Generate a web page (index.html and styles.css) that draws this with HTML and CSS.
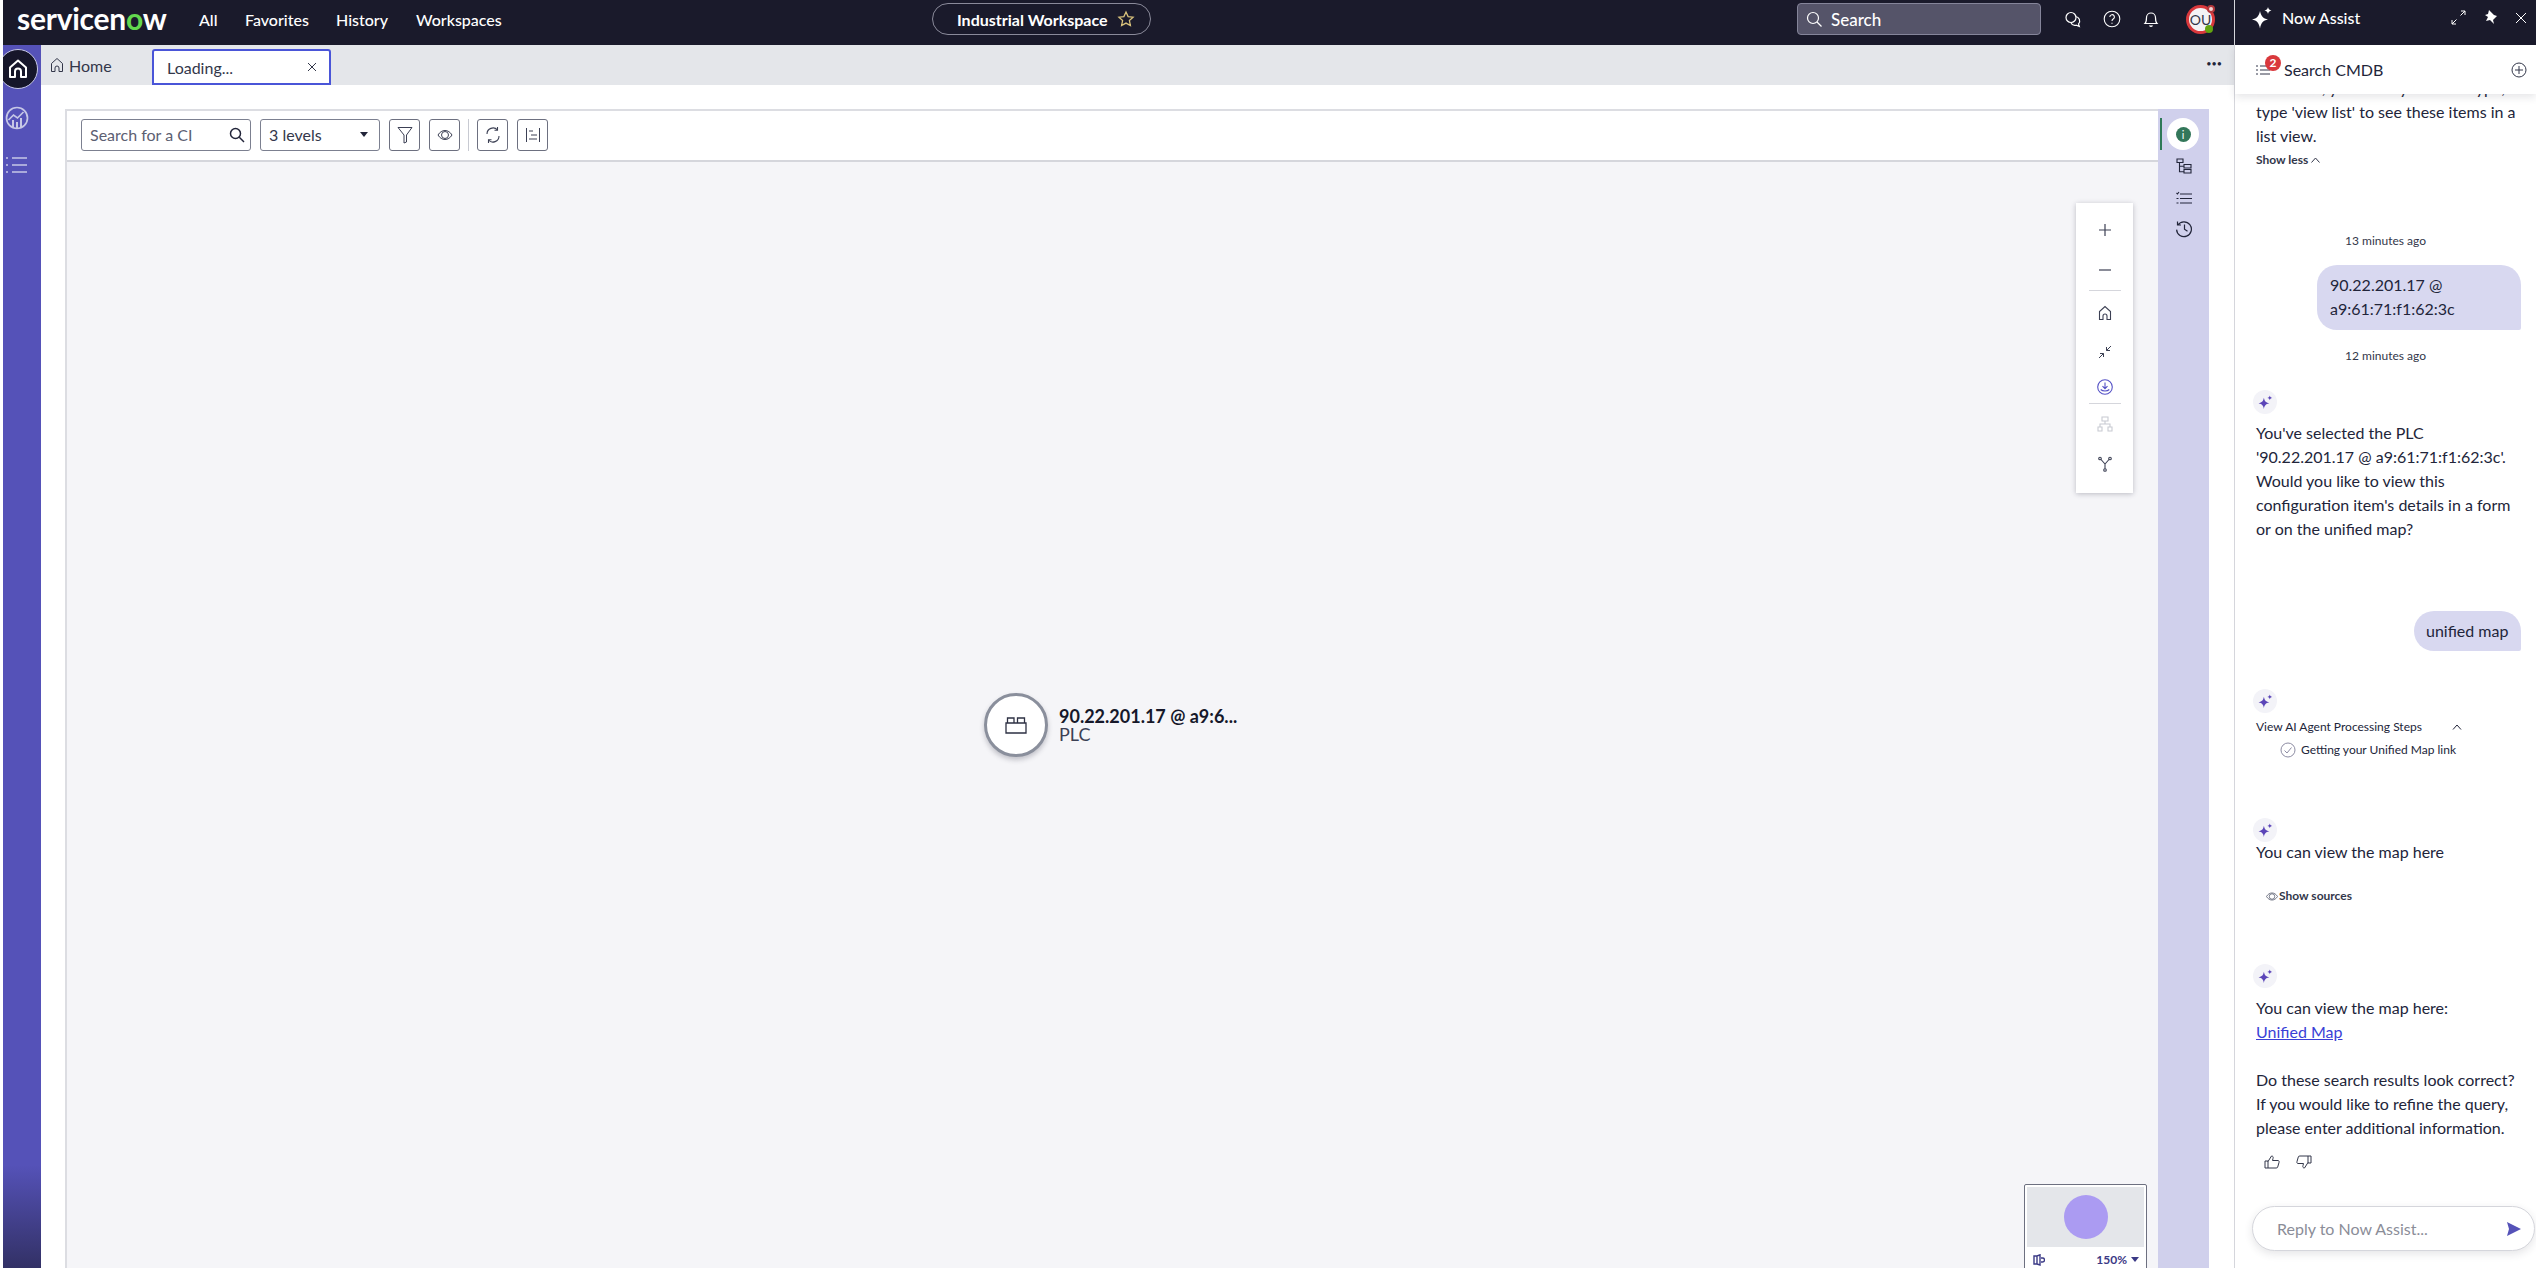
FILE: index.html
```html
<!DOCTYPE html>
<html lang="en">
  <head>
    <meta charset="UTF-8" />
    <title>Unified Map</title>
    <link rel="stylesheet" href="styles.css">
  </head>
  <body>
    <div class="app">
      <main class="main">
        <!-- Top navigation -->
        <header class="topbar">
          <div class="logo">servicen<span class="logo-o">o</span>w</div>
          <nav class="nav-links">
            <a class="nav-all">All</a>
            <a class="nav-fav">Favorites</a>
            <a class="nav-his">History</a>
            <a>Workspaces</a>
          </nav>
          <div class="workspace-pill">
            Industrial Workspace
            <svg width="18" height="18" viewBox="0 0 18 18"><path d="M9 2l2.100 4.600 5 .6-3.700 3.400 1 5L9 13.100 4.600 15.600l1-5L1.900 7.200l5-.6z" fill="none" stroke="#d9c27c" stroke-width="1.300"/></svg>
          </div>
          <div class="global-search">
            <svg width="18" height="18" viewBox="0 0 18 18" fill="none" stroke="#fff" stroke-width="1.200"><circle cx="8" cy="8" r="5.500"/><path d="M12 12l4.500 4.500"/></svg>
            <span>Search</span>
          </div>
          <div class="top-icons">
            <svg width="18" height="18" viewBox="0 0 18 18" fill="none" stroke="#fff" stroke-width="1.200"><circle cx="7" cy="7.500" r="5"/><path d="M11.500 6.500a4.500 4.500 0 0 1 3 7.500l.8 2.500-3-1.300a4.500 4.500 0 0 1-5.300-2.200"/></svg>
            <svg width="18" height="18" viewBox="0 0 18 18" fill="none" stroke="#fff" stroke-width="1.100"><circle cx="9" cy="9" r="7.800"/><path d="M6.800 7a2.300 2.300 0 1 1 3.400 2c-.8.500-1.200 1-1.200 2M9 12.700v1"/></svg>
            <svg width="18" height="18" viewBox="0 0 18 18" fill="none" stroke="#fff" stroke-width="1.200"><path d="M3 13.500c1.500-1.500 1.500-3 1.500-6a4.500 4.500 0 0 1 9 0c0 3 0 4.500 1.500 6zM7.500 15.500c.8.800 2.200.8 3 0"/></svg>
          </div>
          <div class="avatar">
            OU
            <span class="avatar-dot-top"></span>
            <span class="avatar-dot"></span>
          </div>
        </header>

        <div class="workspace">
          <!-- Left icon strip -->
          <aside class="sidebar">
            <div class="side-home">
              <svg width="24" height="24" viewBox="0 0 24 24" fill="none" stroke="#fff" stroke-width="2"><path d="M4 20V10.500L12 3.500l8 7V20h-5v-5.500a3 3 0 0 0-6 0V20z" stroke-linejoin="round"/></svg>
            </div>
            <svg class="side-chart" width="24" height="24" viewBox="0 0 24 24" fill="none" stroke="#c6c7e6" stroke-width="1.700"><circle cx="12" cy="12" r="10.500"/><path d="M3.500 14l5-5 4 3 6-6" /><path d="M8 21v-7M12 22v-6M16 21v-9" stroke-width="2"/></svg>
            <svg class="side-list" width="24" height="24" viewBox="0 0 24 24" fill="none" stroke="#c6c7e6" stroke-width="1.600"><path d="M1 5h2M7 5h15M1 12h2M7 12h15M1 19h2M7 19h15"/></svg>
          </aside>

          <div class="content-col">
            <div class="tabs">
              <div class="tab-home">
                <svg width="14" height="16" viewBox="0 0 14 16" fill="none" stroke="#33374a" stroke-width="1"><path d="M1.500 14.500V6.500L7 1.500l5.500 5v8H9V11a2 2 0 0 0-4 0v3.500z"/></svg>
                Home
              </div>
              <div class="tab-active">
                Loading...
                <svg width="10" height="10" viewBox="0 0 10 10" stroke="#33374a" stroke-width="1"><path d="M1 1l8 8M9 1l-8 8"/></svg>
              </div>
              <div class="tab-more">&bull;&bull;&bull;</div>
            </div>

            <div class="content">
              <div class="map-card">
                <div class="map-main">
                  <div class="map-toolbar">
                    <div class="ci-search">
                      <span>Search for a CI</span>
                      <svg width="16" height="16" viewBox="0 0 16 16" fill="none" stroke="#22253a" stroke-width="1.500"><circle cx="6.500" cy="6.500" r="5"/><path d="M10.300 10.300l4.700 4.700"/></svg>
                    </div>
                    <div class="level-select">
                      <span>3 levels</span>
                      <i class="caret"></i>
                    </div>
                    <button class="tool-btn">
                      <svg width="16" height="18" viewBox="0 0 16 18" fill="none" stroke="#3c4054"><path d="M1 1.500h14L9.500 9v7L7 17V9z"/></svg>
                    </button>
                    <button class="tool-btn">
                      <svg width="16" height="14" viewBox="0 0 16 14" fill="none" stroke="#3c4054"><path d="M1 7c3.500-6 10.500-6 14 0-3.500 6-10.500 6-14 0z"/><circle cx="8" cy="7" r="3.500"/></svg>
                    </button>
                    <span class="tool-divider"></span>
                    <button class="tool-btn">
                      <svg width="16" height="18" viewBox="0 0 16 18" fill="none" stroke="#3c4054" stroke-width="1.100"><path d="M2 8a6 6 0 0 1 10.500-4M14 10a6 6 0 0 1-10.500 4"/><path d="M12.500 1v3.200H9.500M3.500 17v-3.200h3"/></svg>
                    </button>
                    <button class="tool-btn">
                      <svg width="16" height="16" viewBox="0 0 16 16" fill="none" stroke="#3c4054"><path d="M1.500 1v14M14.500 1v14M4 4h4M6 8h6M4 12h8"/></svg>
                    </button>
                  </div>

                  <div class="map-canvas">
                    <div class="map-controls">
                      <button class="ctl"><svg width="16" height="16" viewBox="0 0 16 16" stroke="#3c4054" stroke-width="1.200"><path d="M8 2v12M2 8h12"/></svg></button>
                      <button class="ctl ctl-minus"><svg width="14" height="4" viewBox="0 0 14 4" stroke="#3c4054" stroke-width="1.200"><path d="M1 2h12"/></svg></button>
                      <hr class="ctl-sep">
                      <button class="ctl ctl-home"><svg width="14" height="16" viewBox="0 0 14 16" fill="none" stroke="#3c4054" stroke-width="1.100"><path d="M1.500 14.500V6.500L7 1.500l5.500 5v8H9V11a2 2 0 0 0-4 0v3.500z"/></svg></button>
                      <button class="ctl ctl-fit"><svg width="14" height="14" viewBox="0 0 14 14" fill="none" stroke="#3c4054" stroke-width="1"><path d="M1 13l4.500-4.500M2 8.500h3.500V12M13 1L8.500 5.500M12 5.500H8.500V2"/></svg></button>
                      <button class="ctl ctl-save"><svg width="16" height="16" viewBox="0 0 16 16" fill="none" stroke="#5552c6" stroke-width="1.100"><circle cx="8" cy="8" r="7.300"/><path d="M8 3.500v6M5.500 7.200L8 9.700l2.500-2.500M3.700 10.500c2 2 6.600 2 8.600 0" /></svg></button>
                      <hr class="ctl-sep ctl-sep-low">
                      <button class="ctl ctl-tree"><svg width="16" height="16" viewBox="0 0 16 16" fill="none" stroke="#c8cad2" stroke-width="1.100"><path d="M5 1h6v4H5zM1 11h4v4H1zM11 11h4v4h-4zM8 5v3M3 11V8h10v3"/></svg></button>
                      <button class="ctl ctl-fork"><svg width="14" height="16" viewBox="0 0 14 16" fill="none" stroke="#3c4054" stroke-width="1.100"><circle cx="2" cy="2.500" r="1.300"/><circle cx="12" cy="2.500" r="1.300"/><circle cx="7" cy="14" r="1.300"/><path d="M3 3.500L7 8l4-4.500M7 8v4.700"/></svg></button>
                    </div>

                    <div class="ci-node">
                      <div class="ci-circle">
                        <svg width="22" height="18" viewBox="0 0 22 18" fill="none" stroke="#2d3043" stroke-width="1.300"><path d="M1 7h20v10H1zM2.500 7V2h6.500v5M12.500 7V2H19.500v5"/></svg>
                      </div>
                      <div class="ci-label">
                        <div class="ci-name">90.22.201.17 @ a9:6...</div>
                        <div class="ci-type">PLC</div>
                      </div>
                    </div>

                    <div class="minimap">
                      <div class="minimap-view"><span class="minimap-dot"></span></div>
                      <div class="minimap-foot">
                        <svg width="12" height="12" viewBox="0 0 12 12" fill="none" stroke="#3b3a86" stroke-width="1.400"><path d="M1 2h3l3-1.200V11L4 10H1zM4 2v8M8 4h1.500a2 2 0 0 1 0 4H8"/></svg>
                        <span>150%</span><i class="caret caret-blue"></i>
                      </div>
                    </div>
                  </div>
                </div>

                <!-- Contextual side rail -->
                <div class="rail">
                  <div class="rail-info"><span class="info-dot">i</span></div>
                  <svg class="rail-tree" width="16" height="16" viewBox="0 0 16 16" fill="none" stroke="#22253a" stroke-width="1.100"><path d="M1 1h6v3.500H1zM8 6.500h7V10H8zM8 11.500h7V15H8zM3.500 4.500v9.300H8M3.500 8.300H8"/></svg>
                  <svg class="rail-steps" width="16" height="14" viewBox="0 0 16 14" fill="none" stroke="#22253a" stroke-width="1.100"><path d="M4 3h12M4 7.500h12M4 12h12M.5 7.500h2M.5 12h2M.5 2l1 1 1.500-2"/></svg>
                  <svg class="rail-history" width="18" height="18" viewBox="0 0 18 18" fill="none" stroke="#22253a" stroke-width="1.200"><path d="M2.900 5A7.400 7.400 0 1 1 1.600 9.600M2.500 1.500V5H6M9.500 4.500v4.800l3 2"/></svg>
                </div>
              </div>
            </div>
          </div>
        </div>
      </main>

      <!-- Now Assist panel -->
      <aside class="assist">
        <div class="assist-bar">
          <svg width="22" height="24" viewBox="0 0 22 24" fill="#fff"><path d="M9 5c1 5 3 7.500 8 8.500-5 1-7 3.500-8 9-1-5.500-3-8-8-9 5-1 7-3.500 8-8.500zM17 1c.4 2 1.200 3 3.500 3.500-2.300.5-3.100 1.500-3.500 3.500-.4-2-1.200-3-3.500-3.500 2.300-.5 3.100-1.500 3.500-3.500z"/></svg>
          <span class="assist-title">Now Assist</span>
          <svg class="bar-expand" width="15" height="15" viewBox="0 0 15 15" fill="none" stroke="#fff"><path d="M1 14l4.500-4.500M1 10v4h4M14 1L9.500 5.500M10 1h4v4"/></svg>
          <svg class="bar-pin" width="14" height="16" viewBox="0 0 14 16" fill="#fff"><path d="M5 0l5 5 3 1-4 4 1 4-4-4-4 1 2-4-3-2 3-1z"/></svg>
          <svg class="bar-close" width="12" height="12" viewBox="0 0 12 12" stroke="#fff"><path d="M1 1l10 10M11 1L1 11"/></svg>
        </div>

        <div class="assist-sub">
          <svg class="sub-list" width="14" height="14" viewBox="0 0 14 14" stroke="#33374a"><path d="M0 3h2M4 3h10M0 7h2M4 7h10M0 11h2M4 11h10"/></svg>
          <span class="sub-badge">2</span>
          <span class="sub-title">Search CMDB</span>
          <svg class="sub-plus" width="16" height="16" viewBox="0 0 16 16" fill="none" stroke="#33374a"><circle cx="8" cy="8" r="7"/><path d="M8 4v8M4 8h8"/></svg>
        </div>

        <div class="chat">
          <p class="msg msg-top">If needed, you can try another type, or<br>type 'view list' to see these items in a<br>list view.</p>
          <div class="show-less">Show less
            <svg width="9" height="6" viewBox="0 0 9 6" fill="none" stroke="#33374a"><path d="M.5 5.500l4-4.500 4 4.500"/></svg>
          </div>

          <div class="time t1">13 minutes ago</div>
          <div class="bubble b1">90.22.201.17 @<br>a9:61:71:f1:62:3c</div>
          <div class="time t2">12 minutes ago</div>

          <div class="spark s1"><svg width="15" height="15" viewBox="0 0 14 14" fill="#5b45b8"><path d="M5.500 2.500c.5 3 1.600 4.300 5 5.300-3.400.9-4.500 2.200-5 5.200-.5-3-1.600-4.300-5-5.200 3.400-1 4.500-2.300 5-5.300zM11 .5c.2 1.200.7 1.800 2.300 2.200-1.600.4-2.100 1-2.300 2.200-.2-1.200-.7-1.800-2.300-2.200C10.300 2.300 10.800 1.700 11 .5z"/></svg></div>
          <p class="msg m1">You've selected the PLC<br>'90.22.201.17 @ a9:61:71:f1:62:3c'.<br>Would you like to view this<br>configuration item's details in a form<br>or on the unified map?</p>

          <div class="bubble b2">unified map</div>

          <div class="spark s2"><svg width="15" height="15" viewBox="0 0 14 14" fill="#5b45b8"><path d="M5.500 2.500c.5 3 1.600 4.300 5 5.300-3.400.9-4.500 2.200-5 5.200-.5-3-1.600-4.300-5-5.200 3.400-1 4.500-2.300 5-5.300zM11 .5c.2 1.200.7 1.800 2.300 2.200-1.600.4-2.100 1-2.300 2.200-.2-1.200-.7-1.800-2.300-2.200C10.300 2.300 10.800 1.700 11 .5z"/></svg></div>
          <div class="steps-head">View AI Agent Processing Steps
            <svg width="10" height="6" viewBox="0 0 10 6" fill="none" stroke="#22253a"><path d="M1 5.500l4-4.500 4 4.500"/></svg>
          </div>
          <div class="step">
            <svg width="16" height="16" viewBox="0 0 16 16" fill="none" stroke="#8d8ca3"><circle cx="8" cy="8" r="7"/><path d="M4.500 8.500l2.500 2.500 4.500-5.500"/></svg>
            Getting your Unified Map link
          </div>

          <div class="spark s3"><svg width="15" height="15" viewBox="0 0 14 14" fill="#5b45b8"><path d="M5.500 2.500c.5 3 1.600 4.300 5 5.300-3.400.9-4.500 2.200-5 5.200-.5-3-1.600-4.300-5-5.200 3.400-1 4.500-2.300 5-5.300zM11 .5c.2 1.200.7 1.800 2.300 2.200-1.600.4-2.100 1-2.300 2.200-.2-1.200-.7-1.800-2.300-2.200C10.300 2.300 10.800 1.700 11 .5z"/></svg></div>
          <p class="msg m3">You can view the map here</p>
          <div class="sources">
            <svg width="14" height="11" viewBox="0 0 16 14" fill="none" stroke="#555a6d"><path d="M1 7c3.500-6 10.500-6 14 0-3.500 6-10.500 6-14 0z"/><circle cx="8" cy="7" r="3.500"/></svg>
            Show sources
          </div>

          <div class="spark s4"><svg width="15" height="15" viewBox="0 0 14 14" fill="#5b45b8"><path d="M5.500 2.500c.5 3 1.600 4.300 5 5.300-3.400.9-4.500 2.200-5 5.200-.5-3-1.600-4.300-5-5.200 3.400-1 4.500-2.300 5-5.300zM11 .5c.2 1.200.7 1.800 2.300 2.200-1.600.4-2.100 1-2.300 2.200-.2-1.200-.7-1.800-2.300-2.200C10.300 2.300 10.800 1.700 11 .5z"/></svg></div>
          <p class="msg m4">You can view the map here:<br><a class="map-link">Unified Map</a></p>
          <p class="msg m5">Do these search results look correct?<br>If you would like to refine the query,<br>please enter additional information.</p>
          <div class="thumbs">
            <svg width="16" height="14" viewBox="0 0 16 14" fill="none" stroke="#33374a"><path d="M1 6h3v7H1zM4 6.500L7.500 1c1.500 0 2 1 1.500 2.500L8.500 5.500H14c1 0 1.300 1 1 2l-1.300 4.500c-.2.700-.7 1-1.500 1H4"/></svg>
            <svg width="16" height="14" viewBox="0 0 16 14" fill="none" stroke="#33374a"><path d="M15 8h-3V1h3zM12 7.500L8.500 13c-1.500 0-2-1-1.500-2.500l.5-2H2c-1 0-1.300-1-1-2L2.300 2c.2-.7.700-1 1.500-1H12"/></svg>
          </div>
        </div>

        <div class="reply">
          <span>Reply to Now Assist...</span>
          <svg width="14" height="14" viewBox="0 0 14 14" fill="#5552b8"><path d="M0 0l14 7-14 7 2-7-2-7z"/></svg>
        </div>
      </aside>
    </div>
  </body>
</html>
```

FILE: styles.css
```css
* {
  box-sizing: border-box;
}
body {
  margin: 0;
  height: 100vh;
  overflow: hidden;
  font-family: Lato, "Open Sans", sans-serif;
  font-size: 16px;
  color: #22253a;
  background: #fff;
}
svg {
  display: block;
  flex: none;
}
button {
  padding: 0;
  border: none;
  background: none;
}
.app {
  display: flex;
  height: 1268px;
}
.main {
  width: 2234px;
  padding-left: 3px;
  display: flex;
  flex-direction: column;
}

/* Top bar */
.topbar {
  height: 45px;
  background: #1a1a2b;
  display: flex;
  align-items: center;
  color: #fff;
  padding: 0 0 7px 14px;
}
.logo {
  width: 182px;
  font-size: 30px;
  font-weight: 700;
  letter-spacing: -0.25px;
  line-height: 36px;
  margin-top: -3px;
}
.logo-o {
  color: #62d84e;
}
.nav-links {
  display: flex;
  width: 733px;
}
.nav-links a {
  font-size: 16px;
  font-weight: 500;
}
.nav-all {
  width: 46px;
}
.nav-fav {
  width: 91px;
}
.nav-his {
  width: 80px;
}
.workspace-pill {
  width: 219px;
  height: 32px;
  border: 1px solid #8a8a9a;
  border-radius: 16px;
  display: flex;
  align-items: center;
  gap: 9px;
  padding-left: 24px;
  font-weight: 700;
}
.global-search {
  margin-left: 646px;
  width: 244px;
  height: 32px;
  background: #555469;
  border: 1px solid #85859a;
  border-radius: 4px;
  display: flex;
  align-items: center;
  gap: 8px;
  padding-left: 7px;
  font-size: 17px;
  font-weight: 500;
}
.top-icons {
  display: flex;
  gap: 21px;
  margin-left: 23px;
}
.avatar {
  position: relative;
  width: 29px;
  height: 29px;
  margin-left: 26px;
  border-radius: 50%;
  border: 3px solid #d9383c;
  background: #f3f3f5;
  color: #33374a;
  font-size: 14px;
  display: flex;
  align-items: center;
  justify-content: center;
}
.avatar-dot-top {
  position: absolute;
  top: -3px;
  right: -3px;
  width: 8px;
  height: 8px;
  border-radius: 50%;
  background: #f2d6d6;
  border: 2px solid #b5383c;
}
.avatar-dot {
  position: absolute;
  bottom: -2px;
  right: -1px;
  width: 8px;
  height: 8px;
  border-radius: 50%;
  background: #62a30f;
}

/* Left strip */
.workspace {
  flex: 1;
  display: flex;
  min-height: 0;
}
.sidebar {
  width: 38px;
  overflow: hidden;
  background: linear-gradient(to bottom, #5552b8 0, #5552b8 1120px, #232241 1268px);
  display: flex;
  flex-direction: column;
}
.side-home {
  width: 40px;
  height: 40px;
  margin: 4px 0 0 -5px;
  border-radius: 50%;
  background: #16162a;
  border: 1px solid #c6c7e6;
  display: flex;
  align-items: center;
  justify-content: center;
}
.side-chart {
  margin: 17px 0 0 2px;
}
.side-list {
  margin: 23px 0 0 2px;
}
.content-col {
  flex: 1;
  display: flex;
  flex-direction: column;
  min-width: 0;
}

/* Tabs */
.tabs {
  height: 40px;
  background: #e4e6ea;
  display: flex;
  align-items: flex-end;
  flex: none;
}
.tab-home {
  width: 111px;
  height: 40px;
  display: flex;
  align-items: center;
  gap: 5px;
  padding-left: 9px;
  color: #33374a;
}
.tab-active {
  width: 179px;
  height: 36px;
  background: #fff;
  border: 2px solid #4a55d8;
  border-radius: 3px 3px 0 0;
  display: flex;
  align-items: center;
  justify-content: space-between;
  padding: 0 12px 0 13px;
  color: #33374a;
}
.tab-more {
  margin-left: auto;
  height: 40px;
  line-height: 38px;
  padding-right: 12px;
  font-size: 9px;
  letter-spacing: 0;
}

/* Map card */
.content {
  flex: 1;
  min-height: 0;
  padding: 24px 25px 0 24px;
}
.map-card {
  height: 100%;
  display: flex;
}
.map-main {
  flex: 1;
  display: flex;
  flex-direction: column;
  border-left: 2px solid #dcdde2;
  min-width: 0;
}
.map-toolbar {
  height: 53px;
  flex: none;
  background: #fff;
  border-top: 2px solid #dcdde2;
  border-bottom: 2px solid #d5d6dc;
  display: flex;
  align-items: center;
  padding: 0 0 2px 14px;
}
.ci-search {
  width: 170px;
  height: 32px;
  border: 1px solid #7c8090;
  border-radius: 3px;
  display: flex;
  align-items: center;
  justify-content: space-between;
  padding: 0 5px 0 8px;
  font-size: 16px;
  color: #5c6072;
}
.level-select {
  width: 120px;
  height: 32px;
  margin: 0 9px;
  border: 1px solid #7c8090;
  border-radius: 3px;
  display: flex;
  align-items: center;
  justify-content: space-between;
  padding: 0 11px 0 8px;
  font-size: 16px;
  color: #33374a;
}
.caret {
  width: 0;
  height: 0;
  border-left: 4px solid transparent;
  border-right: 4px solid transparent;
  border-top: 5px solid #22253a;
}
.tool-btn {
  width: 31px;
  height: 32px;
  border: 1px solid #6d7080;
  border-radius: 3px;
  margin-right: 9px;
  display: flex;
  align-items: center;
  justify-content: center;
}
.tool-divider {
  width: 1px;
  height: 32px;
  background: #c8cad2;
  margin: 0 8px 0 -1px;
}

/* Canvas */
.map-canvas {
  flex: 1;
  position: relative;
  overflow: hidden;
  background: #f5f5f8;
}
.map-controls {
  position: absolute;
  top: 41px;
  right: 25px;
  width: 57px;
  height: 290px;
  background: #fff;
  box-shadow: 0 1px 5px rgba(40, 40, 60, 0.28);
  display: flex;
  flex-direction: column;
  align-items: center;
  padding-top: 14px;
}
.ctl {
  height: 26px;
  display: flex;
  align-items: center;
  justify-content: center;
}
.ctl-minus {
  margin-top: 13px;
  height: 28px;
}
.ctl-sep {
  width: 32px;
  height: 1px;
  border: none;
  margin: 6px 0 9px;
  background: #d5d6dc;
}
.ctl-sep-low {
  margin: 2px 0 7px;
}
.ctl-fit {
  margin-top: 13px;
}
.ctl-save {
  margin-top: 8px;
  height: 28px;
}
.ctl-tree {
  margin-top: 0;
}
.ctl-fork {
  margin-top: 14px;
}
.ci-node {
  position: absolute;
  left: 917px;
  top: 531px;
  display: flex;
  align-items: center;
  gap: 11px;
}
.ci-circle {
  width: 64px;
  height: 64px;
  border-radius: 50%;
  background: #fff;
  border: 3px solid #8a8f9c;
  box-shadow: 0 3px 5px rgba(40, 40, 60, 0.25);
  display: flex;
  align-items: center;
  justify-content: center;
}
.ci-name {
  font-size: 18px;
  font-weight: 700;
  line-height: 18px;
  color: #16182a;
}
.ci-type {
  font-size: 18px;
  line-height: 18px;
  color: #3c4054;
}
.minimap {
  position: absolute;
  right: 11px;
  bottom: -16px;
  width: 123px;
  height: 100px;
  background: #fff;
  border: 1px solid #6d7080;
  border-radius: 2px;
  padding: 2px;
}
.minimap-view {
  height: 60px;
  background: #e4e6ea;
  display: flex;
  align-items: center;
  justify-content: center;
}
.minimap-dot {
  width: 44px;
  height: 44px;
  border-radius: 50%;
  background: #ab9bf2;
}
.minimap-foot {
  display: flex;
  align-items: center;
  padding: 5px 5px 0 6px;
  font-size: 12px;
  font-weight: 700;
  color: #3b3a86;
}
.minimap-foot span {
  margin-left: auto;
  margin-right: 4px;
}
.caret-blue {
  border-top-color: #3b3a86;
}

/* Rail */
.rail {
  width: 51px;
  background: #d0d0ec;
  display: flex;
  flex-direction: column;
  align-items: center;
  position: relative;
}
.rail-info {
  width: 32px;
  height: 32px;
  margin: 9px 0 0 -1px;
  border-radius: 50%;
  background: #fff;
  display: flex;
  align-items: center;
  justify-content: center;
}
.rail-info::before {
  content: "";
  position: absolute;
  left: 2px;
  top: 9px;
  width: 2px;
  height: 32px;
  background: #2f7a58;
}
.info-dot {
  width: 15px;
  height: 15px;
  border-radius: 50%;
  background: #33775a;
  color: #fff;
  font-size: 11px;
  line-height: 15px;
  text-align: center;
}
.rail-tree {
  margin-top: 8px;
}
.rail-steps {
  margin-top: 17px;
}
.rail-history {
  margin-top: 15px;
}

/* Now Assist */
.assist {
  width: 302px;
  border-left: 1px solid #d5d6dc;
  display: flex;
  flex-direction: column;
  position: relative;
}
.assist-bar {
  height: 45px;
  flex: none;
  margin-left: -1px;
  border-left: 1px solid #d5d6dc;
  background: #1a1a2b;
  color: #fff;
  display: flex;
  align-items: center;
  padding: 0 0 10px 16px;
}
.assist-title {
  margin-left: 9px;
  font-weight: 500;
}
.bar-expand {
  margin-left: auto;
}
.bar-pin {
  margin-left: 18px;
}
.bar-close {
  margin: 0 9px 0 17px;
}
.assist-sub {
  position: relative;
  z-index: 2;
  height: 49px;
  flex: none;
  background: #fff;
  box-shadow: 0 3px 8px rgba(40, 40, 60, 0.12);
  display: flex;
  align-items: center;
  padding: 0 9px 0 21px;
}
.sub-badge {
  position: absolute;
  left: 30px;
  top: 10px;
  width: 16px;
  height: 16px;
  border-radius: 50%;
  background: #d9383c;
  color: #fff;
  font-size: 12px;
  font-weight: 700;
  line-height: 16px;
  text-align: center;
}
.sub-title {
  margin-left: 14px;
}
.sub-plus {
  margin-left: auto;
}

/* Chat flow */
.chat {
  flex: 1;
  min-height: 0;
  overflow: hidden;
  padding-left: 21px;
  margin-right: 15px;
}
.msg {
  margin: 0;
  line-height: 24px;
  color: #22253a;
}
.msg-top {
  margin-top: -18px;
  width: 280px;
  white-space: nowrap;
}
.show-less {
  margin-top: 4px;
  display: flex;
  align-items: center;
  gap: 3px;
  font-size: 12px;
  font-weight: 700;
  line-height: 16px;
  color: #33374a;
}
.time {
  padding-right: 6px;
  font-size: 12px;
  line-height: 16px;
  text-align: center;
  color: #33374a;
}
.t1 {
  margin-top: 65px;
}
.bubble {
  margin-left: auto;
  background: #d8d8f0;
  font-size: 16px;
  line-height: 24px;
  white-space: nowrap;
}
.b1 {
  width: 204px;
  margin-top: 16px;
  padding: 8px 13px 9px;
  border-radius: 20px 20px 2px 20px;
}
.t2 {
  margin-top: 18px;
}
.spark {
  width: 24px;
  height: 24px;
  margin-left: -3px;
  border-radius: 50%;
  background: #f3f3f8;
  display: flex;
  align-items: center;
  justify-content: center;
}
.s1 {
  margin-top: 26px;
}
.m1 {
  margin-top: 7px;
}
.b2 {
  width: 107px;
  margin-top: 70px;
  padding: 8px 12px;
  border-radius: 20px 20px 2px 20px;
}
.s2 {
  margin-top: 38px;
}
.steps-head {
  margin-top: 6px;
  width: 206px;
  display: flex;
  align-items: center;
  justify-content: space-between;
  font-size: 12px;
  line-height: 16px;
  color: #22253a;
}
.step {
  margin-top: 7px;
  margin-left: 24px;
  display: flex;
  align-items: center;
  gap: 5px;
  font-size: 12px;
  line-height: 16px;
}
.s3 {
  margin-top: 60px;
}
.m3 {
  margin-top: -2px;
}
.sources {
  margin-top: 24px;
  margin-left: 9px;
  display: flex;
  align-items: center;
  gap: 0;
  font-size: 12px;
  font-weight: 700;
  line-height: 16px;
  color: #33374a;
}
.s4 {
  margin-top: 60px;
}
.m4 {
  margin-top: 8px;
}
.map-link {
  color: #3a3fd6;
  text-decoration: underline;
}
.m5 {
  margin-top: 24px;
}
.thumbs {
  margin: 15px 0 0 8px;
  display: flex;
  gap: 16px;
}
.reply {
  position: absolute;
  left: 17px;
  right: 1px;
  bottom: 17px;
  height: 45px;
  background: #fff;
  border: 1px solid #d5d6dc;
  border-radius: 23px;
  box-shadow: 0 3px 8px rgba(40, 40, 60, 0.12);
  display: flex;
  align-items: center;
  justify-content: space-between;
  padding: 0 13px 0 24px;
  color: #8b8d98;
}
```
